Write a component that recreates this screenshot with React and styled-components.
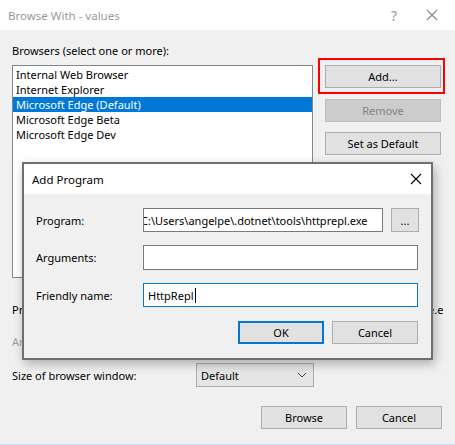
import React from "react";
import styled, { createGlobalStyle } from "styled-components";

const GlobalStyle = createGlobalStyle`
  html, body {
    margin: 0;
    padding: 0;
    background: #f0f0f0;
  }
  body {
    font-family: "Noto Sans", "Open Sans", sans-serif;
    font-size: 11px;
    color: #000;
  }
`;

const Window = styled.div`
  position: relative;
  width: 455px;
  height: 445px;
  background: #f0f0f0;
  overflow: hidden;
  box-sizing: border-box;
  border-bottom: 1px solid #c9d8ec;
`;

const TitleBar = styled.div`
  height: 30px;
  background: #fff;
  display: flex;
  align-items: center;
  padding-left: ${(p) => p.$pad || 8}px;
  box-sizing: border-box;
`;

const TitleText = styled.div`
  flex: 1;
  color: ${(p) => p.$color || "#999"};
  font-size: 11.5px;
`;

const TitleIcon = styled.div`
  width: ${(p) => p.$w}px;
  display: flex;
  justify-content: center;
  align-items: center;
  color: ${(p) => p.$color || "#999"};
  font-size: 14px;
`;

const Body = styled.div`
  padding: 13px 0 0 12px;
`;

const Label = styled.div`
  line-height: 15px;
  color: ${(p) => (p.$disabled ? "#a0a0a0" : "#000")};
  white-space: nowrap;
`;

const TopRow = styled.div`
  display: flex;
  align-items: flex-start;
  gap: 5px;
`;

const ListBox = styled.div`
  margin-top: 7px;
  width: 301px;
  height: 213px;
  box-sizing: border-box;
  border: 1px solid #828790;
  background: #fff;
  padding-top: 1px;
`;

const ListItem = styled.div`
  height: 15px;
  line-height: 15px;
  padding-left: 3px;
  background: ${(p) => (p.$selected ? "#0078d7" : "transparent")};
  color: ${(p) => (p.$selected ? "#fff" : "#000")};
`;

const ButtonColumn = styled.div`
  display: flex;
  flex-direction: column;
`;

const Highlight = styled.div`
  border: 2px solid #ff0000;
  padding: 5px 2px 4px 5px;
  width: 127px;
  box-sizing: border-box;
`;

const Button = styled.div`
  width: ${(p) => p.$w || 116}px;
  height: ${(p) => p.$h || 23}px;
  box-sizing: border-box;
  display: flex;
  align-items: center;
  justify-content: center;
  background: ${(p) => (p.$disabled ? "#cccccc" : "#e1e1e1")};
  border: ${(p) =>
    p.$default ? "2px solid #0078d7" : p.$disabled ? "1px solid #bfbfbf" : "1px solid #adadad"};
  color: ${(p) => (p.$disabled ? "#838383" : "#000")};
  margin-top: ${(p) => p.$mt || 0}px;
  margin-left: ${(p) => p.$ml || 0}px;
  flex-shrink: 0;
`;

const HiddenRow = styled.div`
  display: flex;
  width: 431px;
  overflow: hidden;
  margin-top: ${(p) => p.$mt}px;
  line-height: 16px;
  white-space: nowrap;
`;

const PathText = styled.div`
  flex: 1;
  min-width: 0;
  display: flex;
  justify-content: flex-end;
  overflow: hidden;
  margin-right: -12px;
  margin-left: 10px;
`;

const SizeRow = styled.div`
  display: flex;
  align-items: center;
  margin-top: 14px;
`;

const SizeLabel = styled.div`
  width: 184px;
`;

const Select = styled.div`
  width: 118px;
  height: 24px;
  box-sizing: border-box;
  border: 1px solid #acacac;
  background: #e5e5e5;
  display: flex;
  align-items: center;
  justify-content: space-between;
  padding: 0 6px 0 4px;
`;

const Footer = styled.div`
  display: flex;
  justify-content: flex-end;
  gap: 9px;
  margin-top: 19px;
  padding-right: 13px;
`;

const Dialog = styled.div`
  position: absolute;
  left: 22px;
  top: 162px;
  width: 411px;
  height: 198px;
  box-sizing: border-box;
  border: 2px solid #6f6f6f;
  background: #f0f0f0;
  box-shadow: 2px 4px 10px rgba(0, 0, 0, 0.28);
`;

const DialogBody = styled.div`
  padding: 14px 12px 0 12px;
  display: flex;
  flex-direction: column;
  gap: 13px;
`;

const FieldRow = styled.div`
  display: flex;
  align-items: center;
`;

const FieldLabel = styled.div`
  width: 107px;
  flex-shrink: 0;
`;

const Input = styled.div`
  width: ${(p) => p.$w}px;
  height: ${(p) => p.$h || 24}px;
  box-sizing: border-box;
  border: 1px solid ${(p) => (p.$focused ? "#0078d7" : "#7a7a7a")};
  background: #fff;
  display: flex;
  align-items: center;
  overflow: hidden;
  white-space: nowrap;
  padding-left: ${(p) => p.$pad ?? 4}px;
`;

const ScrolledText = styled.span`
  margin-left: -5px;
`;

const Caret = styled.span`
  display: inline-block;
  width: 1px;
  height: 15px;
  background: #000;
  margin-left: 1px;
`;

const DialogButtons = styled.div`
  display: flex;
  justify-content: flex-end;
  gap: 8px;
  padding-right: 1px;
  margin-top: 1px;
`;

const CloseIcon = ({ color = "#888" }) => (
  <svg width="12" height="12" viewBox="0 0 12 12">
    <path d="M1 1 L11 11 M11 1 L1 11" stroke={color} strokeWidth="1.1" fill="none" />
  </svg>
);

const Chevron = () => (
  <svg width="10" height="6" viewBox="0 0 10 6">
    <path d="M1 1 L5 5 L9 1" stroke="#444" strokeWidth="1" fill="none" />
  </svg>
);

const browsers = [
  "Internal Web Browser",
  "Internet Explorer",
  "Microsoft Edge (Default)",
  "Microsoft Edge Beta",
  "Microsoft Edge Dev",
];

export default function App() {
  return (
    <>
      <GlobalStyle />
      <Window>
        <TitleBar>
          <TitleText>Browse With - values</TitleText>
          <TitleIcon $w={30}>?</TitleIcon>
          <TitleIcon $w={46}>
            <CloseIcon />
          </TitleIcon>
        </TitleBar>
        <Body>
          <Label>Browsers (select one or more):</Label>
          <TopRow>
            <ListBox>
              {browsers.map((b, i) => (
                <ListItem key={b} $selected={i === 2}>
                  {b}
                </ListItem>
              ))}
            </ListBox>
            <ButtonColumn>
              <Highlight>
                <Button>Add...</Button>
              </Highlight>
              <Button $disabled $mt={5} $ml={7}>
                Remove
              </Button>
              <Button $mt={10} $ml={7}>
                Set as Default
              </Button>
            </ButtonColumn>
          </TopRow>
          <HiddenRow $mt={24}>
            <Label>Program:</Label>
            <PathText>
              <span>C:\Program Files (x86)\Microsoft\Edge\Application\msedge.exe</span>
            </PathText>
          </HiddenRow>
          <HiddenRow $mt={16}>
            <Label $disabled>Arguments:</Label>
          </HiddenRow>
          <SizeRow>
            <SizeLabel>Size of browser window:</SizeLabel>
            <Select>
              <span>Default</span>
              <Chevron />
            </Select>
          </SizeRow>
          <Footer>
            <Button $w={86}>Browse</Button>
            <Button $w={86}>Cancel</Button>
          </Footer>
        </Body>

        <Dialog>
          <TitleBar $pad={8}>
            <TitleText $color="#000">Add Program</TitleText>
            <TitleIcon $w={30} $color="#000">
              <CloseIcon color="#000" />
            </TitleIcon>
          </TitleBar>
          <DialogBody>
            <FieldRow>
              <FieldLabel>Program:</FieldLabel>
              <Input $w={240} $pad={2}>
                <ScrolledText>C:\Users\angelpe\.dotnet\tools\httprepl.exe</ScrolledText>
              </Input>
              <Button $w={28} $h={24} $ml={8}>
                ...
              </Button>
            </FieldRow>
            <FieldRow>
              <FieldLabel>Arguments:</FieldLabel>
              <Input $w={275} $h={25} />
            </FieldRow>
            <FieldRow>
              <FieldLabel>Friendly name:</FieldLabel>
              <Input $w={275} $focused>
                HttpRepl
                <Caret />
              </Input>
            </FieldRow>
            <DialogButtons>
              <Button $w={86} $default>
                OK
              </Button>
              <Button $w={86}>Cancel</Button>
            </DialogButtons>
          </DialogBody>
        </Dialog>
      </Window>
    </>
  );
}
